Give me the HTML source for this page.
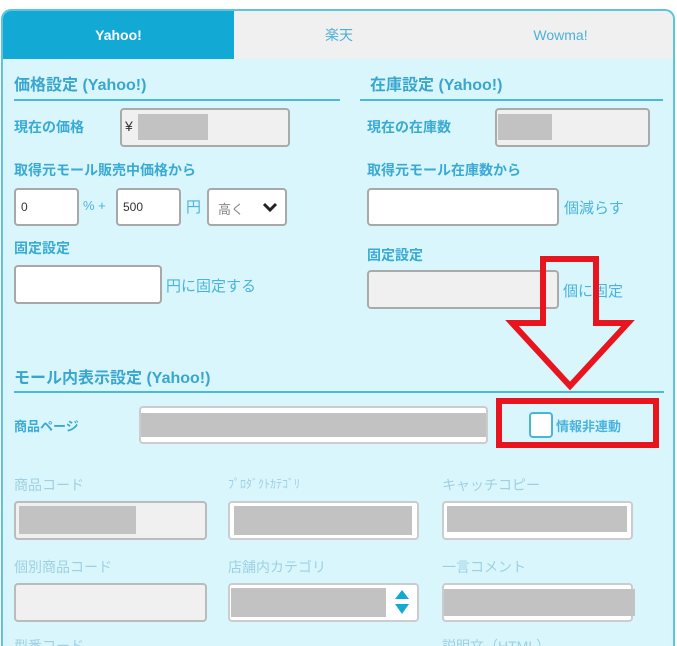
<!DOCTYPE html>
<html style="width:677px;height:646px;overflow:hidden"><head><meta charset="utf-8"><style>
*{margin:0;padding:0;box-sizing:border-box}
body{width:677px;height:646px;background:#fff;overflow:hidden;position:relative;font-family:"Liberation Sans","Noto Sans CJK JP",sans-serif}
.wrap{position:absolute;left:1px;top:9px;width:674px;height:637px;border:2px solid #5cc3e0;border-bottom:none;border-radius:10px 10px 0 0;background:#d9f6fd;overflow:hidden}
.a{position:absolute}
.tab{position:absolute;top:0;height:48px;line-height:48px;text-align:center;font-size:14px;background:#f0f0f0;color:#4db0d8}
.h{position:absolute;font-size:16px;font-weight:bold;color:#3aa6cf}
.l{position:absolute;font-size:14px;font-weight:bold;color:#3aaad4;white-space:nowrap}
.t{position:absolute;font-size:14px;color:#4ab3dc;white-space:nowrap}
.d{position:absolute;font-size:14px;color:#9fd0e2;white-space:nowrap}
.line{position:absolute;height:2px;background:#4bb9dc}
.in{position:absolute;background:#fff;border:2px solid #a8a8a8;border-radius:4px}
.dis{position:absolute;background:#f0f0f0;border:2px solid #aaa;border-radius:4px}
.g{position:absolute;background:#c2c2c2}
</style></head><body>
<div class="wrap">
<div class="tab" style="left:0;width:231px;background:#12aad5;color:#fff;font-weight:bold">Yahoo!</div>
<div class="tab" style="left:231px;width:210px">楽天</div>
<div class="tab" style="left:441px;width:233px">Wowma!</div>
</div>
<div class="h" style="left:14px;top:71px">価格設定 (Yahoo!)</div>
<div class="line" style="left:14px;top:99px;width:326px"></div>
<div class="h" style="left:370px;top:71px">在庫設定 (Yahoo!)</div>
<div class="line" style="left:360px;top:99px;width:303px"></div>

<div class="l" style="left:14px;top:117px">現在の価格</div>
<div class="dis" style="left:120px;top:108px;width:170px;height:39px"></div>
<div class="a" style="left:125px;top:118px;font-size:14px;color:#333">¥</div>
<div class="g" style="left:138px;top:114px;width:70px;height:26px"></div>

<div class="l" style="left:367px;top:117px">現在の在庫数</div>
<div class="dis" style="left:495px;top:108px;width:155px;height:39px"></div>
<div class="g" style="left:498px;top:114px;width:54px;height:26px"></div>

<div class="l" style="left:14px;top:160px">取得元モール販売中価格から</div>
<div class="in" style="left:14px;top:188px;width:65px;height:38px"></div>
<div class="a" style="left:21px;top:200px;font-size:12px;color:#333">0</div>
<div class="t" style="left:83px;top:198px;font-size:13px">% +</div>
<div class="in" style="left:116px;top:188px;width:65px;height:38px"></div>
<div class="a" style="left:123px;top:200px;font-size:12px;color:#333">500</div>
<div class="t" style="left:186px;top:196px;font-size:15px">円</div>
<div class="in" style="left:207px;top:188px;width:80px;height:38px"></div>
<div class="a" style="left:218px;top:199px;font-size:13px;color:#888">高く</div>
<svg class="a" style="left:262px;top:200px" width="16" height="14"><path d="M2 4 L8 10 L14 4" stroke="#222" stroke-width="3" fill="none"/></svg>

<div class="l" style="left:367px;top:160px">取得元モール在庫数から</div>
<div class="in" style="left:367px;top:188px;width:192px;height:38px"></div>
<div class="t" style="left:564px;top:197px;font-size:15px">個減らす</div>

<div class="l" style="left:14px;top:238px">固定設定</div>
<div class="in" style="left:14px;top:265px;width:148px;height:39px"></div>
<div class="t" style="left:166px;top:275px;font-size:15px">円に固定する</div>

<div class="l" style="left:367px;top:245px">固定設定</div>
<div class="dis" style="left:367px;top:270px;width:192px;height:39px"></div>
<div class="t" style="left:563px;top:280px;font-size:15px">個に固定</div>

<div class="h" style="left:14px;top:364px">モール内表示設定 (Yahoo!)</div>
<div class="line" style="left:14px;top:391px;width:650px"></div>

<div class="l" style="left:14px;top:416px;font-size:13px">商品ページ</div>
<div class="in" style="left:139px;top:406px;width:349px;height:38px;border-color:#ccc"></div>
<div class="g" style="left:141px;top:413px;width:345px;height:24px"></div>
<div class="a" style="left:529px;top:412px;width:24px;height:26px;border:2px solid #4bb4dc;border-radius:4px;background:#fff"></div>
<div class="t" style="left:556px;top:416px;font-size:13px;font-weight:bold">情報非連動</div>

<div class="d" style="left:14px;top:475px">商品コード</div>
<div class="d" style="left:228px;top:475px;font-size:12px">ﾌﾟﾛﾀﾞｸﾄｶﾃｺﾞﾘ</div>
<div class="d" style="left:442px;top:475px">キャッチコピー</div>
<div class="dis" style="left:14px;top:501px;width:193px;height:39px;border-color:#bbb"></div>
<div class="g" style="left:19px;top:506px;width:117px;height:28px"></div>
<div class="in" style="left:228px;top:501px;width:191px;height:39px;border-color:#ccc"></div>
<div class="g" style="left:234px;top:506px;width:178px;height:29px"></div>
<div class="in" style="left:442px;top:501px;width:191px;height:39px;border-color:#ccc"></div>
<div class="g" style="left:447px;top:506px;width:180px;height:26px"></div>

<div class="d" style="left:14px;top:557px">個別商品コード</div>
<div class="d" style="left:228px;top:557px">店舗内カテゴリ</div>
<div class="d" style="left:442px;top:557px">一言コメント</div>
<div class="dis" style="left:14px;top:583px;width:193px;height:39px;border-color:#bbb"></div>
<div class="in" style="left:228px;top:583px;width:191px;height:39px;border-color:#ccc"></div>
<div class="g" style="left:231px;top:588px;width:155px;height:29px"></div>
<svg class="a" style="left:394px;top:588px" width="16" height="28"><path d="M1 11 L8 2 L15 11Z M1 16 L8 26 L15 16Z" fill="#12aad5"/></svg>
<div class="in" style="left:442px;top:583px;width:191px;height:39px;border-color:#ccc"></div>
<div class="g" style="left:444px;top:589px;width:191px;height:27px"></div>

<div class="d" style="left:14px;top:636px">型番コード</div>
<div class="d" style="left:442px;top:636px">説明文（HTML）</div>

<svg class="a" style="left:0;top:0" width="677" height="646">
<path d="M543 259 L596 259 L596 323 L628 323 L570 386 L512 323 L543 323 Z" fill="none" stroke="#e8151f" stroke-width="6" stroke-linejoin="miter"/>
<rect x="499" y="401" width="157" height="44" fill="none" stroke="#e8151f" stroke-width="6"/>
</svg>
</body></html>
